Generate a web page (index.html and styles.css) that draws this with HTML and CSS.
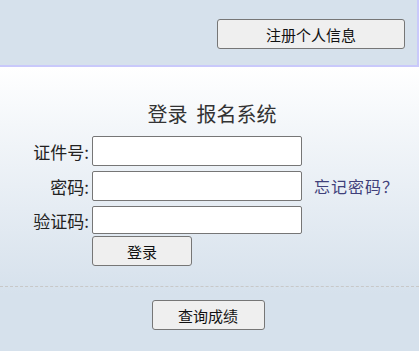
FILE: index.html
```html
<!DOCTYPE html>
<html lang="zh-CN">
<head>
    <meta charset="UTF-8">
    <title>登录 报名系统</title>
    <link rel="stylesheet" href="styles.css">
</head>
<body>
    <div class="header">
        <button class="btn btn-reg">注册个人信息</button>
    </div>

    <div class="content">
        <h1 class="title">登录&nbsp;&nbsp;报名系统</h1>

        <div class="login-form">
            <label class="lbl">证件号:</label>
            <input class="field" type="text">
            <span></span>

            <label class="lbl">密码:</label>
            <input class="field" type="password">
            <a class="forgot" href="#">忘记密码？</a>

            <label class="lbl">验证码:</label>
            <input class="field field-code" type="text">
            <span></span>

            <span></span>
            <button class="btn btn-login">登录</button>
            <span></span>
        </div>

        <div class="query">
            <button class="btn btn-query">查询成绩</button>
        </div>
    </div>
</body>
</html>
```

FILE: styles.css
```css
html, body {
    margin: 0;
    padding: 0;
}
body {
    font-family: "Microsoft YaHei", "Noto Sans CJK SC", sans-serif;
    color: #222;
    background-color: #d6e1ec;
}
.header {
    height: 67px;
    display: flex;
    justify-content: flex-end;
    align-items: flex-start;
    padding: 19px 12px 0 0;
    box-sizing: border-box;
    background-color: #d6e1ec;
    border-bottom: 2px solid #c9c9fb;
    border-right: 2px solid #c9c9fb;
}
.btn {
    font-family: inherit;
    font-size: 15px;
    color: #111;
    background-color: #efefef;
    border: 1px solid #767676;
    border-radius: 3px;
    height: 30px;
    padding: 0;
    cursor: pointer;
}
.btn-reg {
    width: 188px;
}
.content {
    background: linear-gradient(to bottom, #ffffff 0%, #f4f7fa 20%, #d6e1ec 80%, #d6e1ec 100%);
    height: 284px;
    padding-top: 35px;
    box-sizing: border-box;
}
.title {
    margin: 0 0 10px 5px;
    font-size: 20px;
    font-weight: normal;
    line-height: 24px;
    text-align: center;
    color: #333;
}
.login-form {
    display: grid;
    grid-template-columns: 92px 210px auto;
    row-gap: 5px;
    align-items: center;
}
.lbl {
    justify-self: end;
    padding-right: 3px;
    font-size: 17px;
    color: #222;
}
.field {
    width: 210px;
    height: 30px;
    box-sizing: border-box;
    border: 1px solid #767676;
    border-radius: 2px;
    background: #fff;
    margin: 0;
}
.field-code {
    height: 28px;
}
.forgot {
    margin-left: 12px;
    font-size: 16px;
    letter-spacing: 1px;
    color: #40407a;
    text-decoration: none;
}
.btn-login {
    width: 100px;
    margin-top: -3px;
}
.query {
    margin-top: 20px;
    border-top: 1px dashed #c8c8c8;
    padding-top: 13px;
    text-align: center;
}
.btn-query {
    width: 113px;
    margin-left: -3px;
}
```
